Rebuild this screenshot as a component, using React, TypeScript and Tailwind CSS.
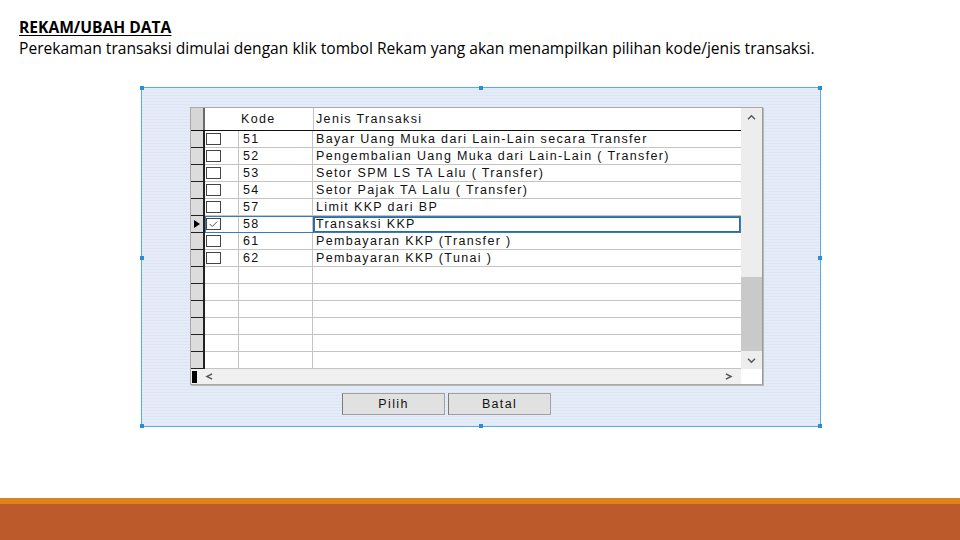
import React from "react";

const rows = [
  { kode: "51", jenis: "Bayar Uang Muka dari Lain-Lain secara Transfer" },
  { kode: "52", jenis: "Pengembalian Uang Muka dari Lain-Lain ( Transfer)" },
  { kode: "53", jenis: "Setor SPM LS TA Lalu ( Transfer)" },
  { kode: "54", jenis: "Setor Pajak TA Lalu ( Transfer)" },
  { kode: "57", jenis: "Limit KKP dari BP" },
  { kode: "58", jenis: "Transaksi KKP", selected: true },
  { kode: "61", jenis: "Pembayaran KKP (Transfer )" },
  { kode: "62", jenis: "Pembayaran KKP (Tunai )" },
];

const cellFont = "font-['Liberation_Sans',Arial,sans-serif] text-[12.5px] tracking-[1.35px] text-[#111]";

function Handle({ className }: { className: string }) {
  return <span className={`absolute h-[4px] w-[4px] bg-[#2a8ed6] ${className}`} />;
}

function Chevron({ d }: { d: string }) {
  return (
    <svg viewBox="0 0 10 8" className="h-[7px] w-[9px]">
      <path d={d} fill="none" stroke="#555" strokeWidth="1.6" />
    </svg>
  );
}

function GridRow({
  kode,
  jenis,
  checked,
  selected,
}: {
  kode?: string;
  jenis?: string;
  checked?: boolean;
  selected?: boolean;
}) {
  return (
    <div className="flex h-[17px]">
      <div className="relative flex w-[14px] shrink-0 items-center border-b border-r-2 border-b-[#222] border-r-[#222] bg-[#dcdcdc]">
        {selected && (
          <span className="ml-[3px] h-0 w-0 border-y-[4px] border-l-[6px] border-y-transparent border-l-black" />
        )}
      </div>
      <div
        className={`flex flex-1 ${selected ? "outline outline-1 -outline-offset-1 outline-[#3c7cb4]" : ""}`}
      >
        <div className="flex w-[34px] shrink-0 items-center border-b border-r border-[#c4c4c4] pl-[1px]">
          {kode && (
            <span className="relative h-[12px] w-[15px] border border-[#444] bg-white">
              {checked && (
                <svg viewBox="0 0 15 12" className="absolute inset-0 h-full w-full">
                  <path d="M3 6 L6 9 L12 3" fill="none" stroke="#333" strokeWidth="1" />
                </svg>
              )}
            </span>
          )}
        </div>
        <div className={`flex w-[74px] shrink-0 items-center border-b border-r border-[#c4c4c4] pl-[4px] ${cellFont}`}>
          {kode}
        </div>
        <div
          className={`flex flex-1 items-center whitespace-nowrap border-b border-[#c4c4c4] pl-[3px] ${cellFont} ${
            selected ? "outline outline-2 -outline-offset-2 outline-[#2f6aa0]" : ""
          }`}
        >
          {jenis}
        </div>
      </div>
    </div>
  );
}

function DataGrid() {
  const empty = Array.from({ length: 6 });
  return (
    <div className="flex h-[278px] w-[573px] border border-[#a8a8a8] border-r-[#9a9a9a] bg-white shadow-[1px_1px_0_#b8b8b8]">
      <div className="flex w-[550px] flex-col">
        <div className="flex h-[23px] border-b border-[#111]">
          <div className="w-[14px] shrink-0 border-r-2 border-[#6a6a6a] bg-[#d6d6d6]" />
          <div className="w-[34px] shrink-0" />
          <div className={`flex w-[74px] shrink-0 items-center pl-[2px] ${cellFont}`}>Kode</div>
          <div className={`flex flex-1 items-center border-l border-[#c4c4c4] pl-[2px] ${cellFont}`}>
            Jenis Transaksi
          </div>
        </div>
        {rows.map((r) => (
          <GridRow key={r.kode} kode={r.kode} jenis={r.jenis} checked={r.selected} selected={r.selected} />
        ))}
        {empty.map((_, i) => (
          <GridRow key={i} />
        ))}
        <div className="flex h-[15px] items-center bg-[#f0f0f0]">
          <span className="ml-[1px] h-[12px] w-[5px] bg-black" />
          <span className="ml-[8px] flex">
            <Chevron d="M8 1 L2 4 L8 7" />
          </span>
          <span className="ml-auto mr-[8px] flex">
            <Chevron d="M2 1 L8 4 L2 7" />
          </span>
        </div>
      </div>
      <div className="flex w-[21px] flex-col bg-[#ededed]">
        <div className="flex h-[18px] items-center justify-center">
          <Chevron d="M1 6 L5 2 L9 6" />
        </div>
        <div className="h-[151px]" />
        <div className="h-[74px] bg-[#c9c9c9]" />
        <div className="flex h-[18px] items-center justify-center">
          <Chevron d="M1 2 L5 6 L9 2" />
        </div>
        <div className="flex-1 bg-white" />
      </div>
    </div>
  );
}

function Dialog() {
  return (
    <div className="relative ml-[141px] mt-[28px] h-[340px] w-[680px] border border-[#5ab0dc] bg-[#e2eaf7] bg-[repeating-linear-gradient(0deg,#dde6f5_0px,#dde6f5_1px,#e5ecf8_1px,#e5ecf8_3px)]">
      <Handle className="-left-[2px] -top-[2px]" />
      <Handle className="left-[337px] -top-[2px]" />
      <Handle className="-right-[2px] -top-[2px]" />
      <Handle className="-left-[2px] top-[168px]" />
      <Handle className="-right-[2px] top-[168px]" />
      <Handle className="-bottom-[2px] -left-[2px]" />
      <Handle className="-bottom-[2px] left-[337px]" />
      <Handle className="-bottom-[2px] -right-[2px]" />
      <div className="ml-[48px] mt-[19px]">
        <DataGrid />
      </div>
      <div className="ml-[200px] mt-[8px] flex gap-[3px]">
        {["Pilih", "Batal"].map((b) => (
          <button
            key={b}
            className={`h-[22px] w-[103px] border border-[#a0a0a0] border-l-[#7a7a7a] bg-[#e1e1e1] ${cellFont}`}
          >
            {b}
          </button>
        ))}
      </div>
    </div>
  );
}

export default function App() {
  return (
    <div className="flex h-[540px] w-[960px] flex-col bg-white font-['Open_Sans',sans-serif] text-black">
      <div className="pl-[19px] pt-[17px] text-[15.6px] leading-[21px]">
        <p className="font-bold underline decoration-1 underline-offset-2">REKAM/UBAH DATA</p>
        <p className="whitespace-nowrap">
          Perekaman transaksi dimulai dengan klik tombol Rekam yang akan menampilkan pilihan kode/jenis transaksi.
        </p>
      </div>
      <Dialog />
      <footer className="mt-auto">
        <div className="h-[6px] bg-[#e0821c]" />
        <div className="h-[36px] bg-[#bd5a2c]" />
      </footer>
    </div>
  );
}
